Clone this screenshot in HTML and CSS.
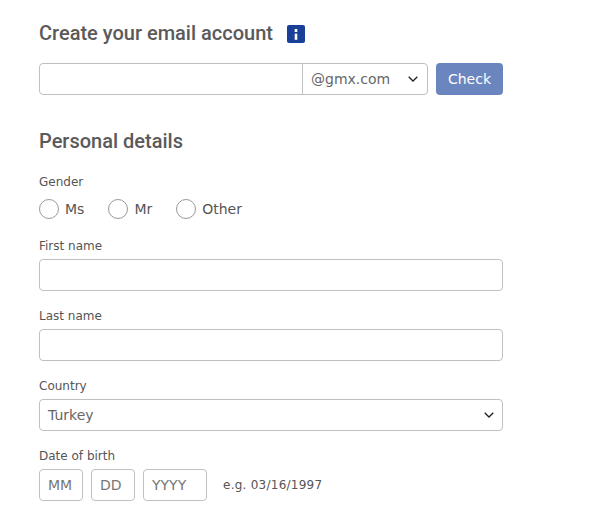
FILE: index.html
```html
<!DOCTYPE html>
<html lang="en">
<head>
    <meta charset="UTF-8">
    <meta name="viewport" content="width=device-width, initial-scale=1.0">
    <title>Create your email account</title>
    <link rel="stylesheet" href="styles.css">
</head>
<body>
    <div class="container">
        <div class="title-row">
            <h2>Create your email account</h2>
            <span class="info-icon">
                <svg width="10" height="12" viewBox="0 0 10 12"><rect x="3.7" y="1" width="2.6" height="3" fill="#fff"/><rect x="3.7" y="5.6" width="2.6" height="6.2" fill="#fff"/></svg>
            </span>
        </div>

        <div class="email-row">
            <div class="email-box">
                <input type="text" class="email-input">
                <div class="domain">
                    <span>@gmx.com</span>
                    <svg class="chevron" width="10" height="6" viewBox="0 0 10 6"><path d="M0.7 0.7 L5 5 L9.3 0.7" fill="none" stroke="#222" stroke-width="1.3"/></svg>
                </div>
            </div>
            <button class="btn-check">Check</button>
        </div>

        <h2 class="section-title">Personal details</h2>

        <div class="field gender">
            <label>Gender</label>
            <div class="radio-row">
                <div class="radio-item"><span class="radio"></span>Ms</div>
                <div class="radio-item"><span class="radio"></span>Mr</div>
                <div class="radio-item"><span class="radio"></span>Other</div>
            </div>
        </div>

        <div class="field">
            <label>First name</label>
            <input type="text" class="text-input">
        </div>

        <div class="field">
            <label>Last name</label>
            <input type="text" class="text-input">
        </div>

        <div class="field">
            <label>Country</label>
            <div class="select-box">
                <span>Turkey</span>
                <svg class="chevron" width="10" height="6" viewBox="0 0 10 6"><path d="M0.7 0.7 L5 5 L9.3 0.7" fill="none" stroke="#222" stroke-width="1.3"/></svg>
            </div>
        </div>

        <div class="field">
            <label>Date of birth</label>
            <div class="date-row">
                <input type="text" class="date-input date-short" placeholder="MM">
                <input type="text" class="date-input date-short" placeholder="DD">
                <input type="text" class="date-input date-long" placeholder="YYYY">
                <span class="hint">e.g. 03/16/1997</span>
            </div>
        </div>
    </div>
</body>
</html>
```

FILE: styles.css
```css
* {
    margin: 0;
    padding: 0;
    box-sizing: border-box;
    font-family: 'DejaVu Sans', sans-serif;
}

body {
    background: #fff;
    color: #555;
}

.container {
    width: 464px;
    margin-left: 39px;
    padding-top: 21px;
}

h2 {
    font-family: 'Roboto', sans-serif;
    font-size: 20px;
    font-weight: 500;
    line-height: 24px;
    color: #5a5a5a;
}

.title-row {
    display: flex;
    align-items: center;
    gap: 14px;
    height: 24px;
}

.info-icon {
    width: 18px;
    height: 18px;
    margin-top: 2px;
    border-radius: 2px;
    background: #1a3f96;
    display: flex;
    align-items: center;
    justify-content: center;
}

.email-row {
    display: flex;
    gap: 8px;
    margin-top: 18px;
}

.email-box {
    display: flex;
    width: 389px;
    height: 32px;
    border: 1px solid #c0c0c0;
    border-radius: 4px;
}

.email-input {
    width: 263px;
    border: none;
    background: transparent;
    border-right: 1px solid #c0c0c0;
    outline: none;
}

.domain {
    flex: 1;
    display: flex;
    align-items: center;
    justify-content: space-between;
    padding: 0 9px 0 8px;
    font-size: 14px;
    color: #666;
}

.btn-check {
    width: 67px;
    height: 32px;
    border: none;
    border-radius: 4px;
    background: #6b86bf;
    color: #fff;
    font-size: 14px;
}

.section-title {
    margin-top: 34px;
}

.field {
    margin-top: 18px;
}

.field label {
    display: block;
    font-size: 12px;
    line-height: 14px;
    color: #555;
    margin-bottom: 6px;
}

.gender {
    margin-top: 22px;
    margin-bottom: 20px;
}

.gender label {
    margin-bottom: 10px;
}

.radio-row {
    display: flex;
    gap: 24px;
    height: 20px;
}

.radio-item {
    display: flex;
    align-items: center;
    gap: 6px;
    font-size: 14px;
    color: #555;
}

.radio {
    width: 20px;
    height: 20px;
    border: 1px solid #999;
    border-radius: 50%;
}

.text-input {
    display: block;
    width: 100%;
    height: 32px;
    border: 1px solid #c0c0c0;
    border-radius: 4px;
}

.select-box {
    display: flex;
    align-items: center;
    justify-content: space-between;
    height: 32px;
    padding: 0 8px 0 8px;
    border: 1px solid #c0c0c0;
    border-radius: 4px;
    font-size: 14px;
    color: #666;
}

.date-row {
    display: flex;
    align-items: center;
    gap: 8px;
}

.date-input {
    height: 32px;
    border: 1px solid #c0c0c0;
    border-radius: 4px;
    padding: 0 8px;
    font-size: 14px;
}

.date-input::placeholder {
    color: #777;
}

.date-short {
    width: 44px;
}

.date-long {
    width: 64px;
}

.hint {
    margin-left: 8px;
    font-size: 12px;
    letter-spacing: 0.25px;
    color: #555;
}
```
